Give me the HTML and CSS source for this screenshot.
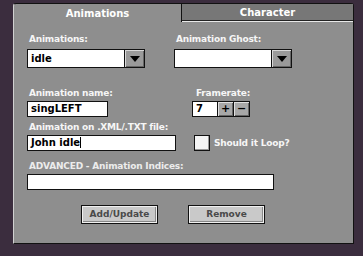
FILE: index.html
```html
<!DOCTYPE html>
<html>
<head>
<meta charset="utf-8">
<link rel="stylesheet" href="styles.css">
</head>
<body>
<div class="window">
  <div class="tabs">
    <div class="tab active">Animations</div>
    <div class="tab inactive">Character</div>
  </div>
  <div class="content">
    <div class="row r1">
      <div class="field f-anim">
        <div class="label">Animations:</div>
        <div class="dropdown w117"><div class="dd-value">idle</div><div class="dd-btn"><span class="tri"></span></div></div>
      </div>
      <div class="field f-ghost">
        <div class="label">Animation Ghost:</div>
        <div class="dropdown w117"><div class="dd-value"></div><div class="dd-btn"><span class="tri"></span></div></div>
      </div>
    </div>
    <div class="row r2">
      <div class="field f-name">
        <div class="label">Animation name:</div>
        <div class="input w80">singLEFT</div>
      </div>
      <div class="field f-rate">
        <div class="label">Framerate:</div>
        <div class="stepper">
          <div class="input num">7</div>
          <div class="step">+</div>
          <div class="step">&minus;</div>
        </div>
      </div>
    </div>
    <div class="row r3">
      <div class="field f-file">
        <div class="label">Animation on .XML/.TXT file:</div>
        <div class="input w148">John idle<span class="caret"></span></div>
      </div>
      <div class="loop">
        <div class="checkbox"></div>
        <div class="label">Should it Loop?</div>
      </div>
    </div>
    <div class="row r4">
      <div class="field">
        <div class="label dim">ADVANCED - Animation Indices:</div>
        <div class="input w246"></div>
      </div>
    </div>
    <div class="row r5">
      <div class="btn">Add/Update</div>
      <div class="btn">Remove</div>
    </div>
  </div>
</div>
</body>
</html>
```
FILE: styles.css
```css
html, body {
  margin: 0;
  padding: 0;
  background: #3b2d3e;
  width: 363px;
  height: 256px;
  overflow: hidden;
  font-family: "DejaVu Sans", "Liberation Sans", sans-serif;
  font-weight: bold;
}
.window {
  margin: 3px 0 0 13px;
  width: 341px;
  height: 241px;
  box-sizing: border-box;
  background: #8e8e8e;
  border: 1px solid #111;
  border-left: 1px solid #d0d0d0;
  border-top-left-radius: 3px;
  border-top-right-radius: 3px;
  display: flex;
  flex-direction: column;
}
.tabs {
  display: flex;
  height: 18px;
}
.tab {
  font-size: 10px;
  color: #fff;
  display: flex;
  align-items: center;
  justify-content: center;
  box-sizing: border-box;
}
.tab.active {
  width: 168px;
  border-right: 1px solid #111;
}
.tab.inactive {
  flex: 1;
  background: #777;
  border-bottom: 1px solid #e8e8e8;
  box-shadow: inset 0 -1px 0 #222;
}
.content {
  padding: 11px 0 0 13px;
  display: flex;
  flex-direction: column;
}
.row {
  display: flex;
}
.label {
  color: #f6f6f6;
  font-size: 9px;
  line-height: 12px;
  height: 12px;
  letter-spacing: -0.2px;
  white-space: nowrap;
}
.label.dim { color: #ececec; }
.field {
  display: flex;
  flex-direction: column;
}
.f-anim .label, .f-ghost .label { margin-bottom: 4px; margin-left: 2px; }
.f-anim { width: 147px; }
.dropdown {
  display: flex;
  height: 19px;
  box-sizing: border-box;
  border: 1px solid #111;
  background: #fff;
}
.w117 { width: 118px; }
.dd-value {
  flex: 1;
  font-size: 10px;
  line-height: 17px;
  padding-left: 3px;
  color: #000;
}
.dd-btn {
  width: 19px;
  background: #9a9a9a;
  border-left: 1px solid #111;
  box-shadow: inset 1px 1px 0 #d8d8d8, inset -1px -1px 0 #666;
  display: flex;
  align-items: center;
  justify-content: center;
}
.tri {
  width: 0; height: 0;
  border-left: 5px solid transparent;
  border-right: 5px solid transparent;
  border-top: 6px solid #000;
}
.r2 { margin-top: 19px; }
.f-name { width: 165px; }
.f-name .label, .f-file .label { margin-left: 2px; margin-bottom: 2px; }
.input {
  box-sizing: border-box;
  height: 16px;
  background: #fff;
  border: 1px solid #111;
  font-size: 10px;
  line-height: 14px;
  padding-left: 3px;
  color: #000;
}
.w80 { width: 81px; }
.w148 { width: 149px; }
.w246 { width: 247px; }
.f-rate .label { margin-left: 4px; margin-bottom: 2px; }
.stepper { display: flex; }
.input.num { width: 26px; }
.step {
  width: 16px;
  height: 16px;
  box-sizing: border-box;
  border: 1px solid #111;
  border-left: none;
  background: #a8a8a8;
  box-shadow: inset 1px 1px 0 #e0e0e0, inset -1px -1px 0 #666;
  font-size: 11px;
  line-height: 14px;
  text-align: center;
  color: #000;
}
.caret {
  display: inline-block;
  width: 1px;
  height: 11px;
  background: #000;
  vertical-align: -2px;
}
.r3 { margin-top: 4px; }
.f-file { width: 167px; }
.loop {
  display: flex;
  align-items: center;
  gap: 4px;
  margin-top: 14px;
  height: 16px;
}
.checkbox {
  width: 16px;
  height: 16px;
  box-sizing: border-box;
  background: #f4f4f4;
  border: 1px solid #111;
  box-shadow: inset -1px -1px 0 #999;
}
.r4 { margin-top: 9px; }
.r4 .label { margin-left: 2px; margin-bottom: 2px; }
.r5 {
  margin-top: 15px;
  padding-left: 54px;
  gap: 30px;
}
.btn {
  width: 77px;
  height: 19px;
  box-sizing: border-box;
  border: 1px solid #111;
  background: #c9c9c9;
  box-shadow: inset 0 0 0 1px #f0f0f0, inset -2px -2px 0 #888;
  color: #4a4a4a;
  font-size: 9px;
  line-height: 17px;
  text-align: center;
}
```
